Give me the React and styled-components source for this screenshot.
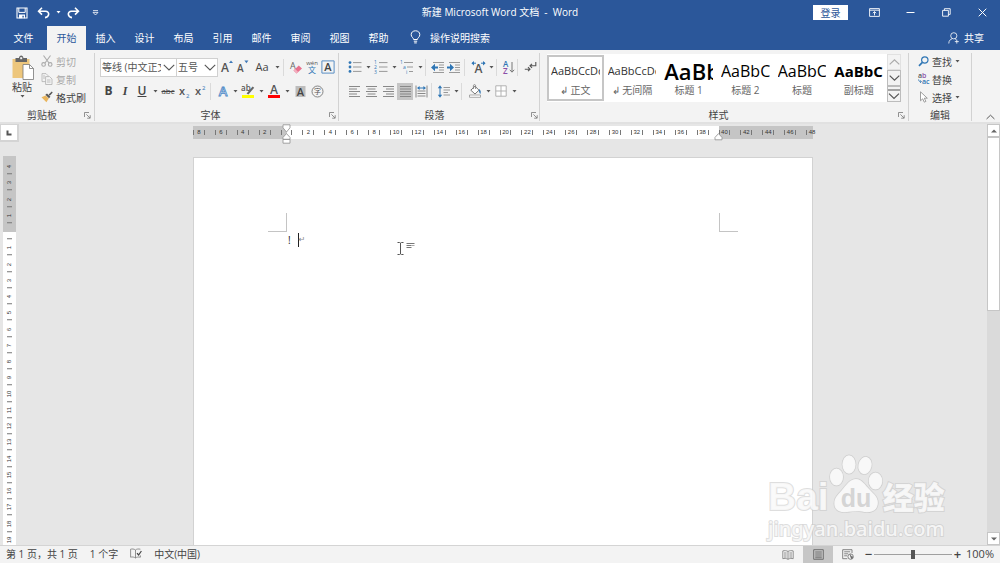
// App.jsx
import React, { useState } from 'react';
import styled, { createGlobalStyle } from 'styled-components';

const GlobalStyle = createGlobalStyle`
  * {
    box-sizing: border-box;
  }
  body {
    margin: 0;
    overflow: hidden;
    font-family: "Open Sans", "Noto Sans CJK SC", sans-serif;
    font-size: 10px;
    color: #444444;
  }
  button, select, input {
    font: inherit;
    color: inherit;
    margin: 0;
    padding: 0;
    border: none;
    background: none;
  }
  svg {
    flex: none;
    overflow: visible;
  }
`;

const Window = styled.div`
  display: flex;
  flex-direction: column;
  height: 100vh;
  background: #e6e6e6;
`;

/* ---------- title bar ---------- */

const TitleBar = styled.header`
  display: grid;
  grid-template-columns: 1fr auto 1fr;
  align-items: center;
  height: 26px;
  padding-bottom: 1px;
  background: #2b579a;
  color: #ffffff;
`;

const QuickAccess = styled.div`
  display: flex;
  align-items: center;
  padding-left: 12px;
`;

const WindowTitle = styled.div`
  white-space: pre;
  padding-bottom: 2px;
`;

const WindowControls = styled.div`
  display: flex;
  align-items: center;
  justify-content: flex-end;
`;

const TitleButton = styled.button`
  display: flex;
  align-items: center;
  justify-content: center;
  width: ${(props) => props.$w || 36}px;
  height: 24px;
`;

const LoginButton = styled.button`
  width: 35px;
  height: 15px;
  line-height: 14px;
  margin-right: 8px;
  background: #ffffff;
  color: #2b579a;
`;

/* ---------- tabs ---------- */

const TabBar = styled.nav`
  display: flex;
  align-items: stretch;
  height: 24px;
  padding-left: 4px;
  background: #2b579a;
  color: #ffffff;
`;

const Tab = styled.button`
  width: 39px;
  padding-bottom: 2px;
  margin-right: ${(props) => (props.$file ? 4 : 0)}px;
  background: ${(props) => (props.$active ? '#f3f3f3' : 'transparent')};
  color: ${(props) => (props.$active ? '#2b579a' : '#ffffff')};
`;

const TellMe = styled.button`
  display: flex;
  align-items: center;
  gap: 9px;
  margin-left: 12px;
  padding-bottom: 2px;
`;

const ShareButton = styled.button`
  display: flex;
  align-items: center;
  gap: 4px;
  margin-left: auto;
  padding: 0 16px 1px 0;
`;

/* ---------- ribbon ---------- */

const Ribbon = styled.div`
  display: flex;
  height: 72px;
  padding-top: 3px;
  background: #f3f3f3;
`;

const Group = styled.section`
  display: flex;
  flex-direction: column;
  flex: ${(props) => (props.$grow ? '1 1 0' : '0 0 auto')};
  min-width: 0;
  height: 68px;
  padding: 0 ${(props) => props.$right || 4}px 0 ${(props) => props.$left || 5}px;
  border-right: 1px solid #d2d2d2;
`;

const GroupBody = styled.div`
  flex: 1;
  display: flex;
  flex-direction: ${(props) => (props.$rows ? 'column' : 'row')};
`;

const GroupFooter = styled.div`
  display: flex;
  align-items: center;
  height: 12px;
`;

const GroupLabel = styled.span`
  flex: 1;
  padding-right: 8px;
  text-align: center;
  line-height: 12px;
`;

const Launcher = styled.button`
  display: flex;
  align-items: center;
`;

const ToolRow = styled.div`
  display: flex;
  align-items: center;
  height: 24px;
  margin-top: ${(props) => (props.$first ? 2 : 0)}px;
`;

const Tool = styled.button`
  display: flex;
  align-items: center;
  justify-content: center;
  width: ${(props) => props.$w || 16}px;
  height: 17px;
  background: ${(props) => (props.$on ? '#c5c5c5' : 'transparent')};
`;

const Letter = styled.span`
  font-size: 12px;
  line-height: 16px;
  font-weight: ${(props) => (props.$bold ? 700 : 600)};
  font-style: ${(props) => (props.$italic ? 'italic' : 'normal')};
  font-family: ${(props) => (props.$italic ? '"Liberation Serif", serif' : 'inherit')};
  text-decoration: ${(props) => (props.$under ? 'underline' : 'none')};
`;

const SmallLetters = styled.span`
  font-size: ${(props) => props.$size || 10}px;
  line-height: 16px;
  text-decoration: ${(props) => (props.$strike ? 'line-through' : 'none')};
`;

const DropButton = styled.button`
  display: flex;
  align-items: center;
  justify-content: center;
  width: 8px;
  height: 16px;
`;

const Divider = styled.span`
  width: 5px;
  height: 17px;
  border-left: 1px solid #dadada;
  margin-left: ${(props) => props.$before || 0}px;
`;

const Combo = styled.label`
  position: relative;
  display: flex;
  align-items: center;
  width: ${(props) => props.$w}px;
  height: 19px;
  margin-right: ${(props) => (props.$last ? 1 : -1)}px;
  background: #ffffff;
  border: 1px solid #d0d0d0;
`;

const ComboSelect = styled.select`
  appearance: none;
  width: 100%;
  height: 17px;
  padding: 0 15px 0 1px;
  outline: none;
  overflow: hidden;
  color: #555555;
`;

const ComboArrow = styled.svg`
  position: absolute;
  right: 1px;
  pointer-events: none;
`;

/* clipboard */

const PasteButton = styled.button`
  display: flex;
  flex-direction: column;
  align-items: center;
  gap: 1px;
  width: 28px;
  height: 51px;
  padding-top: 2px;
  line-height: 13px;
`;

const CommandList = styled.div`
  display: flex;
  flex-direction: column;
  width: ${(props) => props.$w || 48}px;
  padding-left: ${(props) => props.$left || 0}px;
`;

const Command = styled.button`
  display: flex;
  align-items: center;
  gap: 3px;
  height: 18px;
  padding-bottom: 2px;
  white-space: nowrap;
  color: ${(props) => (props.$off ? '#a8a8a8' : '#444444')};
`;

/* styles gallery */

const Gallery = styled.div`
  display: flex;
  flex: 1;
  height: 48px;
  margin: 1px 4px 0 0;
  background: #ffffff;
`;

const StyleGrid = styled.div`
  flex: 1;
  display: grid;
  grid-template-columns: repeat(6, minmax(0, 1fr));
`;

const StyleCell = styled.button`
  display: flex;
  flex-direction: column;
  align-items: stretch;
  overflow: hidden;
  padding: 1px 2px;
  margin: 1px 0;
  border: 2px solid ${(props) => (props.$on ? '#c6c6c6' : 'transparent')};
`;

const Preview = styled.span`
  height: 26px;
  line-height: 26px;
  overflow: hidden;
  white-space: nowrap;
  text-align: left;
  font-size: ${(props) => props.$size}px;
  font-weight: ${(props) => props.$weight || 400};
  color: ${(props) => (props.$size > 12 ? '#000000' : '#333333')};
`;

const StyleName = styled.span`
  line-height: 13px;
  text-align: center;
  color: #666666;
  white-space: nowrap;
`;

const GalleryScroll = styled.div`
  display: flex;
  flex-direction: column;
  width: 14px;
`;

const GalleryButton = styled.button`
  flex: 1;
  display: flex;
  align-items: center;
  justify-content: center;
  border: 1px solid ${(props) => (props.$off ? '#e1e1e1' : '#bcbcbc')};
  background: #f3f3f3;
`;

const CollapseButton = styled.button`
  display: flex;
  flex: 0 0 28px;
  align-items: flex-end;
  justify-content: flex-end;
  padding: 0 5px 2px 0;
`;

/* ---------- document area ---------- */

const Workspace = styled.main`
  flex: 1;
  min-height: 0;
  display: grid;
  grid-template-columns: 19px 1fr 13px;
  border-top: 2px solid #e1e1e1;
`;

const SideColumn = styled.div`
  display: flex;
  flex-direction: column;
  min-height: 0;
`;

const TabStop = styled.button`
  display: flex;
  align-items: center;
  justify-content: center;
  height: 18px;
  background: #ffffff;
  border: 2px solid #d4d4d4;
  border-left-width: 1px;
  border-top-width: 1px;
`;

const VerticalRuler = styled.div`
  flex: 1;
  min-height: 0;
  width: 13px;
  margin: 14px 0 0 3px;
  overflow: hidden;
  background: linear-gradient(#c5c5c5 76px, #ffffff 76px);
`;

const VerticalScale = styled.div`
  display: grid;
  grid-template-rows: repeat(24, 1fr);
  height: calc(100% + 3px);
  padding-top: 2px;
`;

const VerticalMark = styled.span`
  position: relative;
  display: flex;
  align-items: center;
  justify-content: center;
  writing-mode: vertical-rl;
  transform: rotate(180deg);
  font-family: "Liberation Sans", sans-serif;
  font-size: 6px;
  line-height: 13px;
  color: #333333;

  &::before {
    content: "";
    position: absolute;
    top: 0;
    left: 4px;
    width: 5px;
    height: 1px;
    background: #777777;
  }
`;

const Canvas = styled.div`
  display: flex;
  flex-direction: column;
  align-items: center;
  min-height: 0;
  padding-top: 2px;
`;

const Ruler = styled.div`
  position: relative;
  flex: none;
  width: min(620px, 100%);
  height: 13px;
  margin-bottom: 18px;
  background: linear-gradient(#ffffff, #ffffff) center / calc(100% - 188px) 100% no-repeat #c5c5c5;
`;

const ScaleMarks = styled.div`
  display: grid;
  grid-template-columns: repeat(29, minmax(0, 1fr));
  margin: 0 -10px 0 -5px;
`;

const Mark = styled.span`
  position: relative;
  text-align: center;
  font-family: "Liberation Sans", sans-serif;
  font-size: 6px;
  line-height: 13px;
  color: #333333;

  &::before, &::after {
    content: "";
    position: absolute;
    top: 4px;
    width: 1px;
    height: 5px;
    background: #777777;
  }
  &::before { left: 5px; }
  &::after { right: 5px; }
  &:last-child::after { display: none; }
`;

const IndentMarker = styled.svg`
  position: absolute;
  top: -2px;
  ${(props) => (props.$right ? 'right: 90px;' : 'left: 89px;')}
`;

const Page = styled.article`
  flex: 1;
  width: min(620px, 100%);
  padding: 55px 74px 0;
  background: #ffffff;
  border: 1px solid #d2d2d2;
  border-bottom: none;
`;

const MarginMarks = styled.div`
  display: flex;
  justify-content: space-between;
`;

const Corner = styled.span`
  width: 19px;
  height: 19px;
  border-bottom: 1px solid #c4c4c4;
  ${(props) => (props.$right ? 'border-left' : 'border-right')}: 1px solid #c4c4c4;
`;

const Paragraph = styled.p`
  display: flex;
  align-items: center;
  margin: 0 19px;
  padding-left: 1px;
  height: 16px;
  color: #222222;
`;

const Caret = styled.span`
  width: 1px;
  height: 14px;
  margin-left: 7px;
  background: #222222;
`;

const ReturnMark = styled.span`
  font-family: "DejaVu Sans", sans-serif;
  font-size: 8px;
  line-height: 14px;
  color: #888888;
`;

const Pointer = styled.svg`
  position: absolute;
  left: 396px;
  top: 240px;
`;

/* scroll bar */

const ScrollBar = styled.div`
  display: flex;
  flex-direction: column;
  background: #dadada;
`;

const ScrollButton = styled.button`
  display: flex;
  align-items: center;
  justify-content: center;
  height: 13px;
  background: #ffffff;
  border: 1px solid #c6c6c6;
`;

const ScrollTrack = styled.div`
  flex: 1;
`;

const ScrollThumb = styled.div`
  height: 44%;
  background: #ffffff;
  border: 1px solid #c6c6c6;
`;

/* watermark */

const Watermark = styled.div`
  position: absolute;
  right: 52px;
  bottom: 22px;
  width: 180px;
  color: rgba(250, 250, 250, 0.9);
  paint-order: stroke fill;
  -webkit-text-stroke: 2px rgba(200, 200, 200, 0.6);
  pointer-events: none;
`;

const Brand = styled.div`
  display: flex;
  align-items: flex-end;
  height: 62px;
`;

const BrandName = styled.span`
  font-family: "Liberation Sans", sans-serif;
  font-size: 39px;
  line-height: 40px;
  font-weight: 700;
`;

const Paw = styled.svg`
  margin-bottom: 4px;
`;

const PawText = styled.text`
  -webkit-text-stroke: 0;
  stroke: none;
  font-family: "Liberation Sans", sans-serif;
  font-size: 25px;
  font-weight: 700;
`;

const BrandSuffix = styled.span`
  font-family: "Noto Sans CJK SC", sans-serif;
  font-size: 31px;
  line-height: 42px;
  font-weight: 900;
`;

const BrandUrl = styled.div`
  font-family: "Noto Sans", sans-serif;
  font-size: 20px;
  line-height: 24px;
  font-weight: 500;
`;

/* ---------- status bar ---------- */

const StatusBar = styled.footer`
  display: flex;
  align-items: center;
  height: 18px;
  padding: 0 6px;
  background: #f3f3f3;
  border-top: 1px solid #d4d4d4;
`;

const StatusItems = styled.div`
  display: flex;
  align-items: center;
  gap: 12px;
  flex: 1;
  padding-bottom: 2px;
  white-space: nowrap;
`;

const ViewButton = styled.button`
  display: flex;
  align-items: center;
  justify-content: center;
  width: 30px;
  height: 17px;
  background: ${(props) => (props.$on ? '#c6c6c6' : 'transparent')};
`;

const ZoomButton = styled.button`
  width: 11px;
  padding-bottom: 2px;
  font-size: 13px;
  line-height: 16px;
  font-weight: 600;
`;

const ZoomSlider = styled.input`
  appearance: none;
  width: 78px;
  height: 16px;
  background: linear-gradient(#a0a0a0, #a0a0a0) center / 100% 1px no-repeat;

  &::-webkit-slider-thumb {
    appearance: none;
    width: 4px;
    height: 9px;
    background: #555555;
  }
`;

const ZoomValue = styled.button`
  width: 31px;
  padding-bottom: 2px;
  font-size: 11px;
  text-align: right;
`;

/* ---------- small drawings ---------- */

const Drop = ({ color = '#555' }) => (
  <svg width="5" height="3" viewBox="0 0 5 3"><path d="M0.5 0h4L2.5 2.6z" fill={color} /></svg>
);

const Chevron = ({ up, color = '#555', w = 11 }) => (
  <svg width={w} height="6" viewBox="0 0 11 6" fill="none" stroke={color} strokeWidth="1.2">
    <path d={up ? 'M0.7 5.4L5.5 0.8L10.3 5.4' : 'M0.7 0.6L5.5 5.2L10.3 0.6'} />
  </svg>
);

const SaveIcon = () => (
  <svg width="12" height="12" viewBox="0 0 12 12" fill="none" stroke="#fff">
    <path d="M1 1h10v10H1z" strokeWidth="1.1" />
    <path d="M2.8 1v4.4h6.4V1" strokeWidth="1" />
    <path d="M3 7.4h6v3.8H7.8V8.8H6.4v2.4H3z" fill="#fff" stroke="none" />
  </svg>
);

const UndoIcon = ({ flip }) => (
  <svg width="13" height="12" viewBox="0 0 13 12" fill="none" stroke="#fff" strokeWidth="1.6">
    <g transform={flip ? 'translate(13 0) scale(-1 1)' : undefined}>
      <path d="M5 0.8L1.6 4.2L5 7.6M1.8 4.2H8.5C13 4.4 12.6 10 8 10.6" />
    </g>
  </svg>
);

const LauncherIcon = () => (
  <svg width="7" height="7" viewBox="0 0 7 7" fill="none" stroke="#777" strokeWidth="0.8">
    <path d="M0.5 5V0.5H5M2.4 2.4L6 6M6.2 3.2v3h-3" />
  </svg>
);

const PasteIcon = () => (
  <svg width="24" height="25" viewBox="0 0 24 25">
    <path d="M2.5 4h17v19h-17z" fill="#edc67c" />
    <path d="M5.5 3H9c0-3.4 4.4-3.4 4.4 0H17v4H5.5z" fill="#666" />
    <path d="M10.2 2.2h2v2h-2z" fill="#f3f3f3" />
    <path d="M13 9.5h6.5l4 4v11H13z" fill="#fff" stroke="#777" strokeWidth="0.8" />
    <path d="M19.5 9.5v4h4" fill="none" stroke="#777" strokeWidth="0.8" />
  </svg>
);

const CutIcon = () => (
  <svg width="12" height="12" viewBox="0 0 12 12" fill="none" stroke="#aaa" strokeWidth="1.1">
    <path d="M2.5 0.5L8 8M9.5 0.5L4 8" />
    <circle cx="2.6" cy="9.4" r="1.8" /><circle cx="9.2" cy="9.4" r="1.8" />
  </svg>
);

const CopyIcon = () => (
  <svg width="12" height="12" viewBox="0 0 12 12" fill="#f3f3f3" stroke="#b0b0b0" strokeWidth="0.8">
    <path d="M1 0.6h4l2 2v6H1z" />
    <path d="M4.6 3.6h4l2.4 2.4v5.5H4.6z" />
    <path d="M2 3h2M2 5h2M6 7h3.5M6 9h3.5" />
  </svg>
);

const BrushIcon = () => (
  <svg width="12" height="12" viewBox="0 0 12 12">
    <path d="M0.5 6.2L4.6 4.4L7.8 7.6L5.4 11.2z" fill="#e9b55d" />
    <path d="M4.4 3.8L6 2.4L9.4 5.8L8 7.2z" fill="#555" />
    <path d="M7.6 3.6L10.8 0.6L11.7 1.6L8.8 4.8z" fill="#555" />
  </svg>
);

const SizeIcon = ({ grow }) => (
  <svg width="15" height="16" viewBox="0 0 15 16">
    <text x="1" y={grow ? 13 : 13} fontSize={grow ? 12 : 10} fontWeight="600" fill="#555">A</text>
    <path d={grow ? 'M9 4L11 1.4L13 4z' : 'M8.4 1.6L10.4 4.2L12.4 1.6z'} fill="#3d78b8" />
  </svg>
);

const ClearIcon = () => (
  <svg width="14" height="15" viewBox="0 0 14 15">
    <text x="1" y="9" fontSize="9" fill="#666">A</text>
    <path d="M4.5 10.5L9.8 5.6L13 8.6L7.6 13.4z" fill="#e8718d" />
    <path d="M4.5 10.5L6.2 9L9.2 12L7.6 13.4z" fill="#f3b0c0" />
  </svg>
);

const PhoneticIcon = () => (
  <svg width="14" height="16" viewBox="0 0 14 16">
    <text x="7" y="6" fontSize="6" textAnchor="middle" fill="#555">wén</text>
    <text x="7" y="14" fontSize="8" textAnchor="middle" fill="#2f76b5">文</text>
  </svg>
);

const BorderedA = () => (
  <svg width="14" height="14" viewBox="0 0 14 14">
    <path d="M0.9 0.9h12.2v12.2H0.9z" fill="none" stroke="#5b8fc4" />
    <text x="7" y="11" fontSize="11" fontWeight="600" textAnchor="middle" fill="#444">A</text>
  </svg>
);

const ScriptIcon = ({ sup }) => (
  <svg width="12" height="16" viewBox="0 0 12 16">
    <text x="0" y="12" fontSize="11" fontWeight="600" fill="#555">x</text>
    <text x="7" y={sup ? 7 : 15} fontSize="6" fill="#2f76b5">2</text>
  </svg>
);

const EffectIcon = () => (
  <svg width="13" height="15" viewBox="0 0 13 15">
    <text x="6" y="12" fontSize="13" fontWeight="600" textAnchor="middle" fill="#eef5fc" stroke="#4a86c5" strokeWidth="0.8">A</text>
  </svg>
);

const HighlightIcon = () => (
  <svg width="14" height="16" viewBox="0 0 14 16">
    <text x="0" y="8" fontSize="8" fontWeight="600" fill="#555">ab</text>
    <path d="M5.6 10.5L11.6 3.4L13.2 4.8L7.4 11.4z" fill="#666" />
    <path d="M1 12h12v3H1z" fill="#ffff00" />
  </svg>
);

const FontColorIcon = () => (
  <svg width="14" height="16" viewBox="0 0 14 16">
    <text x="7" y="11" fontSize="12" fontWeight="600" textAnchor="middle" fill="#555">A</text>
    <path d="M1 12h12v3H1z" fill="#ff0000" />
  </svg>
);

const ShadeIcon = () => (
  <svg width="11" height="13" viewBox="0 0 11 13">
    <path d="M0.5 1h10v11H0.5z" fill="#bdbdbd" />
    <text x="5.5" y="10.5" fontSize="11" fontWeight="600" textAnchor="middle" fill="#444">A</text>
  </svg>
);

const CircledIcon = () => (
  <svg width="13" height="13" viewBox="0 0 13 13">
    <circle cx="6.5" cy="6.5" r="5.5" fill="none" stroke="#777" strokeWidth="0.9" />
    <text x="6.5" y="9" fontSize="7" textAnchor="middle" fill="#555">字</text>
  </svg>
);

const ListIcon = ({ kind }) => (
  <svg width="14" height="14" viewBox="0 0 14 14">
    {kind === 'bullet' && (
      <g fill="#2f76b5"><circle cx="2" cy="2.6" r="1.4" /><circle cx="2" cy="7" r="1.4" /><circle cx="2" cy="11.4" r="1.4" /></g>
    )}
    {kind === 'number' && (
      <g fill="#2f76b5" fontSize="5"><text x="0" y="4">1</text><text x="0" y="9">2</text><text x="0" y="14">3</text></g>
    )}
    {kind === 'multi' ? (
      <g>
        <g fill="#2f76b5" fontSize="5"><text x="0" y="4">1</text><text x="3" y="9">a</text><text x="6" y="14">i</text></g>
        <path d="M4 2.5h9M7 7h6M9 11.5h4" stroke="#999" />
      </g>
    ) : (
      <path d="M5 2.6h8.5M5 7h8.5M5 11.4h8.5" stroke="#999" />
    )}
  </svg>
);

const IndentIcon = ({ right }) => (
  <svg width="14" height="13" viewBox="0 0 14 13">
    <path d="M2 1.5h11M8 4h5M8 6.5h5M8 9h5M2 11.5h11" stroke="#999" />
    <path d={right ? 'M0 5.5h3V2.8l4 3.7L3 10.2V7.5H0z' : 'M7 5.5H4V2.8L0 6.5L4 10.2V7.5h3z'} fill="#2f76b5" />
  </svg>
);

const ScaleIcon = () => (
  <svg width="15" height="14" viewBox="0 0 15 14">
    <text x="7.5" y="12.5" fontSize="12" fontWeight="600" textAnchor="middle" fill="#555">A</text>
    <path d="M1 3.2h4M10 3.2h4" stroke="#2f76b5" />
    <path d="M0.4 3.2L3 1v4.4zM14.6 3.2L12 1v4.4z" fill="#2f76b5" />
  </svg>
);

const SortIcon = () => (
  <svg width="12" height="15" viewBox="0 0 12 15">
    <text x="0" y="7" fontSize="8" fontWeight="600" fill="#2f76b5">A</text>
    <text x="0" y="14" fontSize="8" fontWeight="600" fill="#8a4fa8">Z</text>
    <path d="M9 2v10M6.8 9.8L9 12.2L11.2 9.8" fill="none" stroke="#777" />
  </svg>
);

const MarksIcon = () => (
  <svg width="13" height="12" viewBox="0 0 13 12" fill="none" stroke="#555" strokeWidth="1.1">
    <path d="M11.8 1v3.8H6.2M8 2.8L6 4.8l2 2M0.8 8.2h5M4 6.2l2 2l-2 2" />
  </svg>
);

const alignPaths = {
  left: 'M1 1.5h11M1 4h8M1 6.5h11M1 9h8M1 11.5h11',
  center: 'M1 1.5h11M2.5 4h8M1 6.5h11M2.5 9h8M1 11.5h11',
  right: 'M1 1.5h11M4 4h8M1 6.5h11M4 9h8M1 11.5h11',
  justify: 'M1 1.5h11M1 4h11M1 6.5h11M1 9h11M1 11.5h11',
};

const AlignIcon = ({ kind }) => (
  <svg width="13" height="13" viewBox="0 0 13 13">
    <path d={alignPaths[kind]} stroke="#888" />
  </svg>
);

const DistributeIcon = () => (
  <svg width="13" height="13" viewBox="0 0 13 13">
    <path d="M1 0.5v12M12 0.5v12" stroke="#888" />
    <path d="M2.5 6h8M2.5 8.5h8M2.5 11h8" stroke="#888" />
    <path d="M4 3h5" stroke="#2f76b5" />
    <path d="M2 3L4.6 1v4zM11 3L8.4 1v4z" fill="#2f76b5" />
  </svg>
);

const SpacingIcon = () => (
  <svg width="14" height="13" viewBox="0 0 14 13">
    <path d="M3 2.5v8" stroke="#2f76b5" />
    <path d="M3 0.3L5.2 3.2H0.8zM3 12.7L0.8 9.8h4.4z" fill="#2f76b5" />
    <path d="M6.5 2.5h6.5M6.5 5h6.5M6.5 7.5h4.5M6.5 10h6.5" stroke="#999" />
  </svg>
);

const BucketIcon = () => (
  <svg width="14" height="14" viewBox="0 0 14 14">
    <path d="M2.8 6.2L7 2.2l4 4L7 10z" fill="#fff" stroke="#777" />
    <path d="M5.4 5V1.6c0-1.3 2.2-1.3 2.2 0V5" fill="none" stroke="#777" strokeWidth="0.8" />
    <path d="M11 5c2 1 2 3 1.4 5c-1-1-1.6-2-1.4-5z" fill="#2f76b5" />
    <path d="M1.5 11h11v2.3h-11z" fill="#fff" stroke="#888" strokeWidth="0.7" />
  </svg>
);

const BordersIcon = () => (
  <svg width="12" height="12" viewBox="0 0 12 12">
    <path d="M0.8 0.8h10.4v10.4H0.8zM6 0.8v10.4M0.8 6h10.4" fill="#fff" stroke="#aaa" strokeWidth="0.9" />
  </svg>
);

const FindIcon = () => (
  <svg width="11" height="11" viewBox="0 0 11 11" fill="none" stroke="#2f76b5">
    <circle cx="6.8" cy="4" r="3.2" strokeWidth="1.2" /><path d="M4.4 6.4L1 9.8" strokeWidth="1.7" />
  </svg>
);

const ReplaceIcon = () => (
  <svg width="11" height="12" viewBox="0 0 11 12">
    <text x="0" y="5" fontSize="7" fontWeight="600" fill="#555">a</text>
    <text x="4" y="5" fontSize="7" fontWeight="600" fill="#8a4fa8">b</text>
    <text x="4" y="11" fontSize="7" fontWeight="600" fill="#2f76b5">ac</text>
    <path d="M0.6 6.4c0 2 1 2.4 2.6 2.2M2 7.2l1.4 1.4L2 10" fill="none" stroke="#2f76b5" strokeWidth="0.8" />
  </svg>
);

const SelectIcon = () => (
  <svg width="11" height="12" viewBox="0 0 11 12">
    <path d="M2.5 0.8v9l2.2-2l1.6 3.4l1.6-0.8L6.3 7.2h3z" fill="#fff" stroke="#888" strokeWidth="0.8" />
  </svg>
);

const tabs = ['开始', '插入', '设计', '布局', '引用', '邮件', '审阅', '视图', '帮助'];

const styleList = [
  { name: '↲ 正文', text: 'AaBbCcDd', size: 11 },
  { name: '↲ 无间隔', text: 'AaBbCcDd', size: 11 },
  { name: '标题 1', text: 'AaBbC', size: 22, weight: 600 },
  { name: '标题 2', text: 'AaBbC', size: 16 },
  { name: '标题', text: 'AaBbC', size: 16 },
  { name: '副标题', text: 'AaBbC', size: 15, weight: 700 },
];

// 标尺刻度
const hMarks = [8, 6, 4, 2, ''].concat(Array.from({ length: 24 }, (_, i) => (i + 1) * 2));
const vMarks = [4, 3, 2, 1, ''].concat(Array.from({ length: 19 }, (_, i) => i + 1));

function Footer({ label, launcher }) {
  return (
    <GroupFooter>
      <GroupLabel>{label}</GroupLabel>
      {launcher && <Launcher aria-label={label}><LauncherIcon /></Launcher>}
    </GroupFooter>
  );
}

function Split({ w = 18, label, children }) {
  return (
    <>
      <Tool $w={w} aria-label={label}>{children}</Tool>
      <DropButton aria-label={label}><Drop /></DropButton>
    </>
  );
}

function FontGroup() {
  return (
    <Group $right={2}>
      <GroupBody $rows>
        <ToolRow $first>
          <Combo $w={77}>
            <ComboSelect aria-label="字体"><option>等线 (中文正文)</option></ComboSelect>
            <ComboArrow width="12" height="7" viewBox="0 0 11 6" fill="none" stroke="#555"><path d="M0.7 0.6L5.5 5.2L10.3 0.6" /></ComboArrow>
          </Combo>
          <Combo $w={42} $last>
            <ComboSelect aria-label="字号"><option>五号</option></ComboSelect>
            <ComboArrow width="12" height="7" viewBox="0 0 11 6" fill="none" stroke="#555"><path d="M0.7 0.6L5.5 5.2L10.3 0.6" /></ComboArrow>
          </Combo>
          <Tool aria-label="增大字号"><SizeIcon grow /></Tool>
          <Tool aria-label="减小字号"><SizeIcon /></Tool>
          <Tool $w={22}><SmallLetters $size={11}>Aa</SmallLetters></Tool>
          <DropButton aria-label="更改大小写"><Drop /></DropButton>
          <Divider $before={2} />
          <Tool aria-label="清除格式"><ClearIcon /></Tool>
          <Tool aria-label="拼音指南"><PhoneticIcon /></Tool>
          <Tool aria-label="字符边框"><BorderedA /></Tool>
        </ToolRow>
        <ToolRow>
          <Tool $w={17}><Letter $bold>B</Letter></Tool>
          <Tool><Letter $italic>I</Letter></Tool>
          <Split label="下划线"><Letter $under>U</Letter></Split>
          <Tool $w={18}><SmallLetters $size={8} $strike>abc</SmallLetters></Tool>
          <Tool aria-label="下标"><ScriptIcon /></Tool>
          <Tool aria-label="上标"><ScriptIcon sup /></Tool>
          <Divider $before={1} />
          <Split w={16} label="文本效果"><EffectIcon /></Split>
          <Split label="突出显示"><HighlightIcon /></Split>
          <Split label="字体颜色"><FontColorIcon /></Split>
          <Tool $w={18} aria-label="字符底纹"><ShadeIcon /></Tool>
          <Tool aria-label="带圈字符"><CircledIcon /></Tool>
        </ToolRow>
      </GroupBody>
      <Footer label="字体" launcher />
    </Group>
  );
}

function ParagraphGroup() {
  return (
    <Group $left={7} $right={1}>
      <GroupBody $rows>
        <ToolRow $first>
          <Split label="项目符号"><ListIcon kind="bullet" /></Split>
          <Split label="编号"><ListIcon kind="number" /></Split>
          <Split label="多级列表"><ListIcon kind="multi" /></Split>
          <Divider $before={1} />
          <Tool aria-label="减少缩进量"><IndentIcon /></Tool>
          <Tool aria-label="增加缩进量"><IndentIcon right /></Tool>
          <Divider $before={2} />
          <Split label="中文版式"><ScaleIcon /></Split>
          <Divider $before={1} />
          <Tool aria-label="排序"><SortIcon /></Tool>
          <Divider />
          <Tool aria-label="显示编辑标记"><MarksIcon /></Tool>
        </ToolRow>
        <ToolRow>
          <Tool $w={17} aria-label="左对齐"><AlignIcon kind="left" /></Tool>
          <Tool $w={17} aria-label="居中"><AlignIcon kind="center" /></Tool>
          <Tool $w={17} aria-label="右对齐"><AlignIcon kind="right" /></Tool>
          <Tool $w={16} $on aria-label="两端对齐"><AlignIcon kind="justify" /></Tool>
          <Tool aria-label="分散对齐"><DistributeIcon /></Tool>
          <Divider $before={2} />
          <Split w={16} label="行距"><SpacingIcon /></Split>
          <Divider $before={1} />
          <Split label="底纹"><BucketIcon /></Split>
          <Split label="边框"><BordersIcon /></Split>
        </ToolRow>
      </GroupBody>
      <Footer label="段落" launcher />
    </Group>
  );
}

function App() {
  const [activeTab, setActiveTab] = useState('开始');
  const [zoom, setZoom] = useState(100);

  return (
    <Window>
      <GlobalStyle />
      <TitleBar>
        <QuickAccess>
          <TitleButton $w={20} aria-label="保存"><SaveIcon /></TitleButton>
          <TitleButton $w={22} aria-label="撤消"><UndoIcon /></TitleButton>
          <DropButton aria-label="撤消选项"><Drop color="#fff" /></DropButton>
          <TitleButton $w={22} aria-label="恢复"><UndoIcon flip /></TitleButton>
          <TitleButton $w={22} aria-label="自定义快速访问工具栏">
            <svg width="7" height="6" viewBox="0 0 7 6" fill="none" stroke="#fff" strokeWidth="0.8"><path d="M1 0.6h5M1 2.4h5L3.5 5z" /></svg>
          </TitleButton>
        </QuickAccess>
        <WindowTitle>{'新建 Microsoft Word 文档  -  Word'}</WindowTitle>
        <WindowControls>
          <LoginButton>登录</LoginButton>
          <TitleButton aria-label="功能区显示选项">
            <svg width="11" height="9" viewBox="0 0 11 9" fill="none" stroke="#fff" strokeWidth="0.9"><path d="M0.6 0.6h9.8v7.8H0.6zM0.6 2.2h9.8M5.5 7.4V3.8M3.8 5.2L5.5 3.6L7.2 5.2" /></svg>
          </TitleButton>
          <TitleButton aria-label="最小化">
            <svg width="9" height="9" viewBox="0 0 9 9" stroke="#fff"><path d="M0.5 4.5h8" /></svg>
          </TitleButton>
          <TitleButton aria-label="还原">
            <svg width="9" height="9" viewBox="0 0 9 9" fill="none" stroke="#fff" strokeWidth="0.9"><path d="M0.6 2.4h5.8v5.8H0.6zM2.4 2.4V0.7h5.8v5.7H6.4" /></svg>
          </TitleButton>
          <TitleButton aria-label="关闭">
            <svg width="9" height="9" viewBox="0 0 9 9" stroke="#fff"><path d="M0.7 0.7l7.6 7.6M8.3 0.7L0.7 8.3" /></svg>
          </TitleButton>
        </WindowControls>
      </TitleBar>

      <TabBar>
        <Tab $file>文件</Tab>
        {tabs.map((tab) => (
          <Tab key={tab} $active={tab === activeTab} onClick={() => setActiveTab(tab)}>{tab}</Tab>
        ))}
        <TellMe>
          <svg width="11" height="14" viewBox="0 0 11 14" fill="none" stroke="#fff" strokeWidth="1">
            <path d="M3.6 9.5C3.6 7.8 1.2 7.2 1.2 4.7C1.2 2.2 3 0.8 5.5 0.8S9.8 2.2 9.8 4.7C9.8 7.2 7.4 7.8 7.4 9.5zM3.8 11.2h3.4M4.2 12.9h2.6" />
          </svg>
          操作说明搜索
        </TellMe>
        <ShareButton>
          <svg width="12" height="12" viewBox="0 0 12 12" fill="none" stroke="#fff" strokeWidth="0.8">
            <circle cx="5.8" cy="3.8" r="3.1" /><path d="M0.8 11.5c0-3 1.6-4.2 3.6-4.8M6.8 6.7l1.6 1M8.8 7.6v4M6.8 9.6h4" />
          </svg>
          共享
        </ShareButton>
      </TabBar>

      <Ribbon>
        <Group $left={8} $right={3}>
          <GroupBody>
            <PasteButton><PasteIcon />粘贴<Drop /></PasteButton>
            <CommandList $w={55} $left={5}>
              <Command $off><CutIcon />剪切</Command>
              <Command $off><CopyIcon />复制</Command>
              <Command><BrushIcon />格式刷</Command>
            </CommandList>
          </GroupBody>
          <Footer label="剪贴板" launcher />
        </Group>
        <FontGroup />
        <ParagraphGroup />
        <Group $grow $left={7} $right={3}>
          <GroupBody>
            <Gallery>
              <StyleGrid>
                {styleList.map((item, index) => (
                  <StyleCell key={item.name} $on={index === 0}>
                    <Preview $size={item.size} $weight={item.weight}>{item.text}</Preview>
                    <StyleName>{item.name}</StyleName>
                  </StyleCell>
                ))}
              </StyleGrid>
              <GalleryScroll>
                <GalleryButton $off aria-label="上一行"><Chevron up color="#aaa" /></GalleryButton>
                <GalleryButton aria-label="下一行"><Chevron /></GalleryButton>
                <GalleryButton aria-label="其他样式">
                  <svg width="12" height="11" viewBox="0 0 12 11" fill="none" stroke="#555" strokeWidth="1.2"><path d="M0 1h12M1 4.6L6 9.4L11 4.6" /></svg>
                </GalleryButton>
              </GalleryScroll>
            </Gallery>
          </GroupBody>
          <Footer label="样式" launcher />
        </Group>
        <Group $left={9} $right={1}>
          <GroupBody>
            <CommandList $w={52}>
              <Command><FindIcon />查找<Drop /></Command>
              <Command><ReplaceIcon />替换</Command>
              <Command><SelectIcon />选择<Drop /></Command>
            </CommandList>
          </GroupBody>
          <Footer label="编辑" />
        </Group>
        <CollapseButton aria-label="折叠功能区"><Chevron up w={9} /></CollapseButton>
      </Ribbon>

      <Workspace>
        <SideColumn>
          <TabStop aria-label="制表符">
            <svg width="6" height="6" viewBox="0 0 6 6"><path d="M1.5 0.5v4h4" fill="none" stroke="#555" strokeWidth="2" /></svg>
          </TabStop>
          <VerticalRuler>
            <VerticalScale>
              {vMarks.map((mark, index) => <VerticalMark key={index}>{mark}</VerticalMark>)}
            </VerticalScale>
          </VerticalRuler>
        </SideColumn>
        <Canvas>
          <Ruler>
            <ScaleMarks>
              {hMarks.map((mark, index) => <Mark key={index}>{mark || '\u00a0'}</Mark>)}
            </ScaleMarks>
            <IndentMarker width="9" height="20" viewBox="0 0 9 20" fill="#fff" stroke="#999" strokeWidth="0.9">
              <path d="M1 0.8h7v3L4.5 8L1 3.8zM1 13.4L4.5 9.6L8 13.4v2H1zM1 15.4h7v3.8H1z" />
            </IndentMarker>
            <IndentMarker $right width="9" height="20" viewBox="0 0 9 20" fill="#fff" stroke="#999" strokeWidth="0.9">
              <path d="M1 13.4L4.5 9.6L8 13.4v2.4H1z" />
            </IndentMarker>
          </Ruler>
          <Page>
            <MarginMarks>
              <Corner />
              <Corner $right />
            </MarginMarks>
            <Paragraph>!<Caret /><ReturnMark>↵</ReturnMark></Paragraph>
          </Page>
        </Canvas>
        <ScrollBar>
          <ScrollButton aria-label="向上滚动"><svg width="6" height="4" viewBox="0 0 6 4"><path d="M0 3.5L3 0.5L6 3.5z" fill="#666" /></svg></ScrollButton>
          <ScrollTrack><ScrollThumb /></ScrollTrack>
          <ScrollButton aria-label="向下滚动"><svg width="6" height="4" viewBox="0 0 6 4"><path d="M0 0.5L3 3.5L6 0.5z" fill="#666" /></svg></ScrollButton>
        </ScrollBar>
      </Workspace>

      <StatusBar>
        <StatusItems>
          <span>第 1 页，共 1 页</span>
          <span>1 个字</span>
          <svg width="12" height="11" viewBox="0 0 12 11" fill="none" stroke="#777" strokeWidth="0.8">
            <path d="M5.5 2C4 0.8 2 0.8 0.6 1.2v8c1.6-0.4 3.4-0.4 4.9 0.8zM5.5 2C6.6 0.9 8.4 0.8 10.4 1.2M5.5 10c1.2-1 2.8-1.2 4.9-0.8V7.4" />
            <path d="M7 5.2l1.6 1.8L11.4 3" stroke="#444" strokeWidth="1.2" />
          </svg>
          <span>中文(中国)</span>
        </StatusItems>
        <ViewButton aria-label="阅读视图">
          <svg width="12" height="10" viewBox="0 0 12 10" fill="none" stroke="#777" strokeWidth="0.8">
            <path d="M6 1.4C4.4 0.5 2.4 0.5 0.8 0.9v7.8c1.6-0.4 3.6-0.4 5.2 0.6C7.6 8.3 9.6 8.3 11.2 8.7V0.9C9.6 0.5 7.6 0.5 6 1.4zM6 1.4v7.9M2 3h2.6M2 5h2.6M2 7h2.6M7.4 3H10M7.4 5H10M7.4 7H10" />
          </svg>
        </ViewButton>
        <ViewButton $on aria-label="页面视图">
          <svg width="11" height="11" viewBox="0 0 11 11" fill="none" stroke="#666" strokeWidth="0.9"><path d="M0.7 0.7h9.6v9.6H0.7zM2.2 3h6.6M2.2 5h6.6M2.2 7h6.6M2.2 8.8h6.6" /></svg>
        </ViewButton>
        <ViewButton aria-label="Web 版式视图">
          <svg width="12" height="11" viewBox="0 0 12 11" fill="none" stroke="#777" strokeWidth="0.9">
            <path d="M10 4V0.7H0.7v9h4.6M2.2 2.8h6M2.2 4.8h4M2.2 6.8h3" /><circle cx="8.6" cy="7.6" r="2.7" fill="#f3f3f3" /><path d="M8 5.4l1.2 2l1.8 0.6l-1.4 2z" fill="#555" />
          </svg>
        </ViewButton>
        <ZoomButton aria-label="缩小" onClick={() => setZoom(Math.max(10, zoom - 10))}>−</ZoomButton>
        <ZoomSlider type="range" aria-label="显示比例" min="10" max="190" value={zoom} onChange={(e) => setZoom(Number(e.target.value))} />
        <ZoomButton aria-label="放大" onClick={() => setZoom(Math.min(190, zoom + 10))}>+</ZoomButton>
        <ZoomValue>{zoom}%</ZoomValue>
      </StatusBar>

      <Pointer width="20" height="15" viewBox="0 0 20 15" fill="none" stroke="#555" strokeWidth="1">
        <path d="M1.5 2.5h2l1 0.6l1-0.6h2M4.5 3v11M1.5 14.5h2l1-0.6l1 0.6h2" />
        <path d="M10.5 3.5h8M10.5 5.5h5M10.5 7.5h5" stroke="#777" /><path d="M15.5 5.5h3" stroke="#aaa" />
      </Pointer>

      <Watermark>
        <Brand>
          <BrandName>Bai</BrandName>
          <Paw width="54" height="60" viewBox="0 0 54 60" fill="#fafafa" fillOpacity="0.9" stroke="#c8c8c8" strokeOpacity="0.8" strokeWidth="1.4">
            <ellipse cx="7.5" cy="24" rx="6.6" ry="8.6" /><ellipse cx="20" cy="11.5" rx="6.6" ry="9.2" />
            <ellipse cx="36" cy="12.5" rx="6.6" ry="8.8" transform="rotate(12 36 12.5)" /><ellipse cx="46.5" cy="28" rx="6.8" ry="8.6" />
            <path d="M27 26C33 26 36 32 41 37C46 42 51 46 48 54C46 59 39 60 33 58.6C29 58 24 58 20 58.8C14 60 7 59 5.6 53C4 45 9 42 13 37C18 31 21 26 27 26z" />
            <PawText x="27" y="54" textAnchor="middle" fill="#d0d0d0">du</PawText>
          </Paw>
          <BrandSuffix>经验</BrandSuffix>
        </Brand>
        <BrandUrl>jingyan.baidu.com</BrandUrl>
      </Watermark>
    </Window>
  );
}

export default App;
